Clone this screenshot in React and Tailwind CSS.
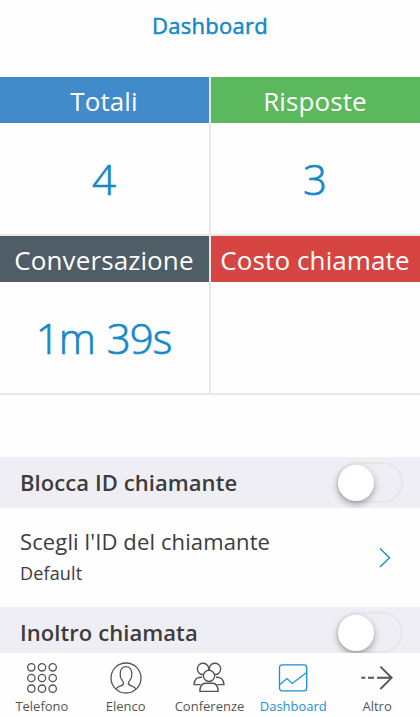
import React from 'react';

const stats = [
  { label: 'Totali', value: '4', header: 'bg-[#428bca]' },
  { label: 'Risposte', value: '3', header: 'bg-[#5cb85c]' },
  { label: 'Conversazione', value: '1m 39s', header: 'bg-[#4f5d66]' },
  { label: 'Costo chiamate', value: '', header: 'bg-[#d64541]' },
];

const DialpadIcon = () => (
  <svg width="34" height="34" viewBox="0 0 34 34" fill="none" stroke="currentColor" strokeWidth="1.3">
    {[6.3, 17, 27.7].map((y) =>
      [6.3, 17, 27.7].map((x) => <circle key={`${x}-${y}`} cx={x} cy={y} r="3.7" />)
    )}
  </svg>
);

const ContactIcon = () => (
  <svg width="34" height="34" viewBox="0 0 34 34" fill="none" stroke="currentColor" strokeWidth="1.3" strokeLinejoin="round">
    <circle cx="17" cy="17" r="15" />
    <path d="M7 28C8 26.2 9.6 25.6 11.6 24.9C13.6 24.2 14.6 23.6 14.6 22.2C14.6 21 13.4 20.1 12.8 18.5C11.6 17.6 11.2 16.2 11.3 14.6C10.9 9 12.6 5.6 17 5.6C21.4 5.6 23.1 9 22.7 14.6C22.8 16.2 22.4 17.6 21.2 18.5C20.6 20.1 19.4 21 19.4 22.2C19.4 23.6 20.4 24.2 22.4 24.9C24.4 25.6 26 26.2 27 28" />
  </svg>
);

const ConferenceIcon = () => (
  <svg width="34" height="34" viewBox="0 0 34 34" fill="none" stroke="currentColor" strokeWidth="1.4" strokeLinejoin="round">
    <path d="M11.3 13.6A5.7 5.7 0 1 1 16.6 9.2" />
    <path d="M17.4 9.2A5.7 5.7 0 1 1 22.7 13.6" />
    <circle cx="17" cy="14.9" r="5.6" />
    <path d="M10 16.2C5.2 15.9 2.2 18.4 2 23.6H8.6" />
    <path d="M24 16.2C28.8 15.9 31.8 18.4 32 23.6H25.4" />
    <path d="M7.9 30.4C7.9 25.2 9.8 22.4 13.6 22.3H20.4C24.2 22.4 26.1 25.2 26.1 30.4Z" />
  </svg>
);

const ChartIcon = () => (
  <svg width="34" height="34" viewBox="0 0 34 34" fill="none" stroke="currentColor" strokeWidth="1.3">
    <rect x="3.5" y="3.8" width="27.2" height="26" rx="2.6" />
    <path d="M3.8 23.4L11 17.6L16.2 22.4L30.6 11.4" />
  </svg>
);

const MoreIcon = () => (
  <svg width="34" height="34" viewBox="0 0 34 34" fill="none" stroke="currentColor" strokeWidth="1.9">
    <path d="M1.3 16.8H5.3M8 16.8H14M17 16.8H32" />
    <path d="M20.4 5.6L31.6 16.8L20.4 28" />
  </svg>
);

const tabs = [
  { label: 'Telefono', icon: DialpadIcon },
  { label: 'Elenco', icon: ContactIcon },
  { label: 'Conferenze', icon: ConferenceIcon },
  { label: 'Dashboard', icon: ChartIcon, active: true },
  { label: 'Altro', icon: MoreIcon },
];

const Toggle = () => (
  <button className="flex h-[41px] w-[67px] shrink-0 items-center rounded-full border-[2.5px] border-[#e6e6e8]">
    <span className="size-[36px] rounded-full bg-white shadow-[0_3px_7px_rgba(0,0,0,0.35)]" />
  </button>
);

const SettingHeader = ({ title }) => (
  <div className="flex h-[51px] shrink-0 items-center justify-between bg-[#efeef4] pr-[17px] pl-[20px]">
    <h2 className="text-[22px] font-semibold tracking-[0.07px]">{title}</h2>
    <Toggle />
  </div>
);

const App = () => {
  return (
    <div className="flex h-[717px] w-[420px] flex-col overflow-hidden bg-[#fefefe] font-['Open_Sans',sans-serif] text-[#3c3c3c]">
      <header className="flex h-[77px] shrink-0 justify-center pt-[10px]">
        <h1 className="text-[22px] leading-[30px] tracking-[0.3px] text-[#1488ca] [-webkit-text-stroke:0.5px]">Dashboard</h1>
      </header>

      <main className="flex min-h-0 flex-1 flex-col overflow-hidden">
        {/* Call statistics */}
        <section className="grid shrink-0 grid-cols-2 gap-x-[2px] gap-y-[2px] border-b-2 border-[#e8e8e8] bg-[#e8e8e8]">
          {stats.map((stat) => (
            <div key={stat.label} className="flex h-[157px] flex-col bg-[#fefefe]">
              <div className={`flex h-[46px] items-center justify-center pt-[2px] pr-[1px] text-[26px] tracking-[0.1px] whitespace-nowrap text-white ${stat.header}`}>
                {stat.label}
              </div>
              <div className="flex flex-1 items-center justify-center pr-[2px] pb-[1px] text-[42px] font-light tracking-[-1px] text-[#1488ca] [-webkit-text-stroke:0.7px] [word-spacing:2px]">
                {stat.value}
              </div>
            </div>
          ))}
        </section>

        {/* Settings */}
        <section className="mt-[62px] flex flex-col">
          <SettingHeader title="Blocca ID chiamante" />
          <div className="flex h-[99px] shrink-0 items-center justify-between pr-[29px] pl-[20px]">
            <div className="pb-[3px]">
              <div className="text-[22px] leading-[34px] tracking-[0.12px]">Scegli l'ID del chiamante</div>
              <div className="text-[18px] leading-[31px] tracking-[0.15px]">Default</div>
            </div>
            <svg width="12" height="20" viewBox="0 0 12 20" fill="none" stroke="#1488ca" strokeWidth="1.3">
              <path d="M1 0.5L10.5 9.7L1 19" />
            </svg>
          </div>
          <SettingHeader title="Inoltro chiamata" />
        </section>
      </main>

      <nav className="grid h-[64px] shrink-0 grid-cols-5 bg-[#fefefe] pr-[1px]">
        {tabs.map(({ label, icon: Icon, active }) => (
          <button
            key={label}
            className={`flex flex-col items-center pt-[8px] text-[13px] leading-[22px] ${active ? 'text-[#1c8fd6]' : 'text-[#555]'}`}
          >
            <Icon />
            <span>{label}</span>
          </button>
        ))}
      </nav>
    </div>
  );
};

export default App;
